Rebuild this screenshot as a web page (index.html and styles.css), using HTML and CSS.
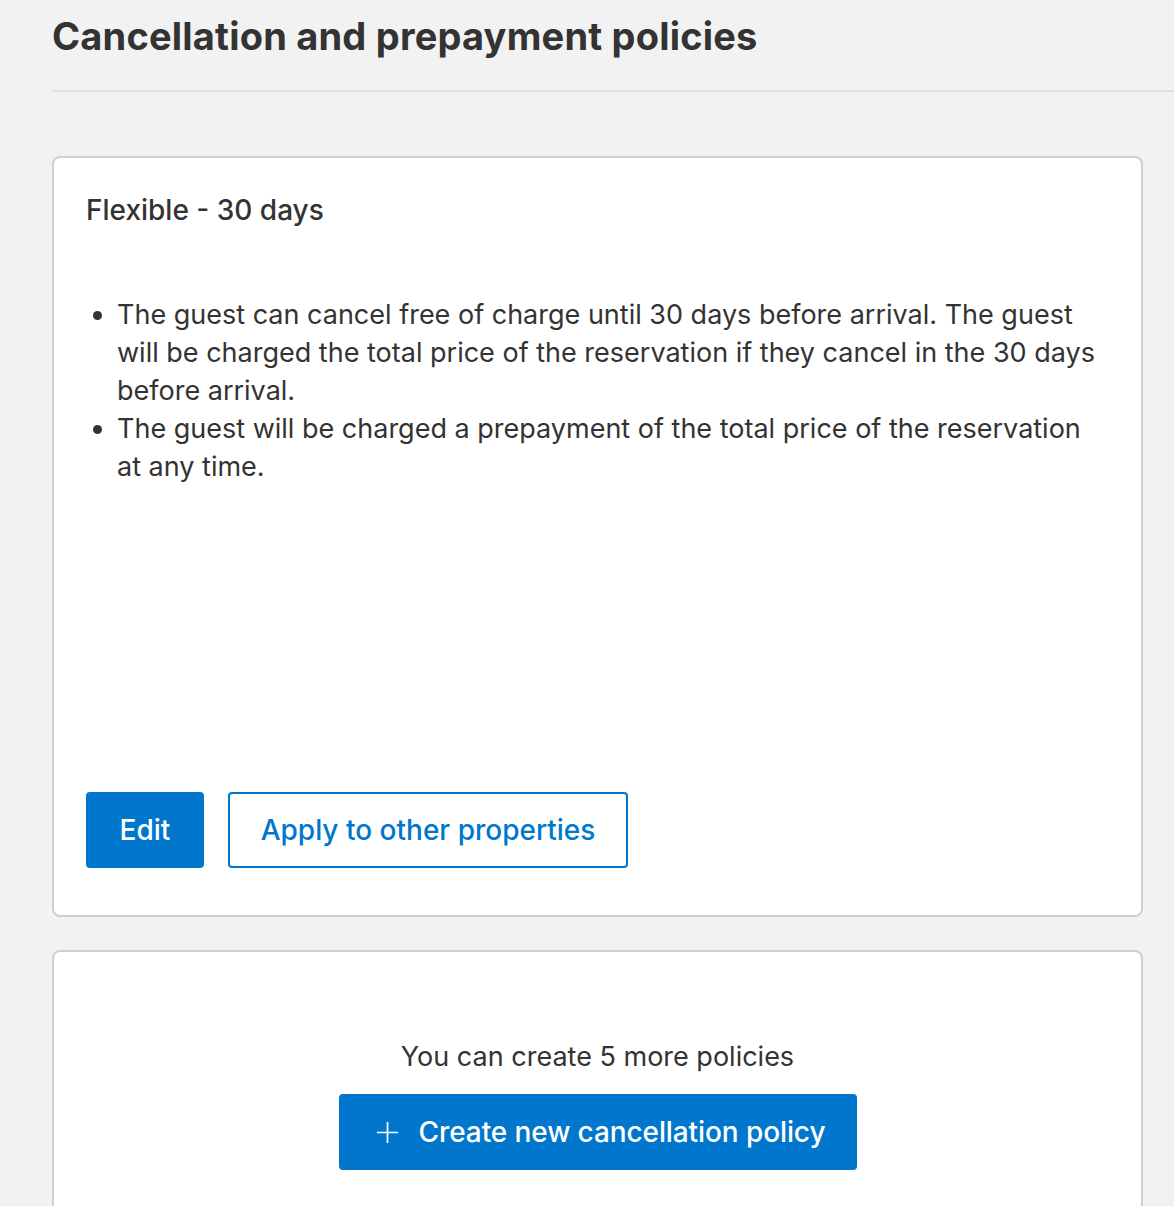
FILE: index.html
```html
<!DOCTYPE html>
<html>
<head>
<meta charset="utf-8">
<link rel="stylesheet" href="styles.css">
</head>
<body>
<main class="page">
  <header class="page-header">
    <h1 class="page-title">Cancellation and prepayment policies</h1>
  </header>
  <section class="cards">
    <article class="card policy-card">
      <h2 class="policy-name">Flexible - 30 days</h2>
      <ul class="policy-list">
        <li>The guest can cancel free of charge until 30 days before arrival. The guest will be charged the total price of the reservation if they cancel in the 30 days before arrival.</li>
        <li>The guest will be charged a prepayment of the total price of the reservation at any time.</li>
      </ul>
      <div class="actions">
        <button class="btn btn-primary btn-edit">Edit</button>
        <button class="btn btn-outline">Apply to other properties</button>
      </div>
    </article>
    <article class="card create-card">
      <p class="create-note">You can create 5 more policies</p>
      <button class="btn btn-primary btn-create">
        <svg class="plus" width="23" height="23" viewBox="0 0 24 24" aria-hidden="true"><path d="M12 1v22M1 12h22" stroke="currentColor" stroke-width="1.8" fill="none"/></svg>
        <span>Create new cancellation policy</span>
      </button>
    </article>
  </section>
</main>
</body>
</html>
```
FILE: styles.css
```css
html, body {
  margin: 0;
  padding: 0;
  background: #f2f2f2;
}
body {
  font-family: Inter, "Open Sans", "Liberation Sans", sans-serif;
  color: #333333;
  overflow: hidden;
  height: 1206px;
}
.page {
  padding-left: 52px;
}
.page-header {
  border-bottom: 2px solid #e0e0e0;
  padding-top: 13px;
  padding-bottom: 31px;
}
.page-title {
  margin: 0;
  font-size: 38px;
  line-height: 46px;
  font-weight: 700;
  letter-spacing: 0.2px;
  color: #333333;
}
.cards {
  margin-right: 31px;
  padding-top: 64px;
  display: flex;
  flex-direction: column;
  gap: 33px;
}
.card {
  background: #ffffff;
  border: 2px solid #cfcfcf;
  border-radius: 8px;
}
.policy-card {
  height: 761px;
  box-sizing: border-box;
  padding: 32px 32px 47px 32px;
  display: flex;
  flex-direction: column;
}
.policy-name {
  margin: 0;
  font-size: 28px;
  line-height: 40px;
  font-weight: 500;
}
.policy-list {
  margin: 66px 0 0 0;
  padding-left: 31px;
  font-size: 27px;
  line-height: 38px;
}
.actions {
  margin-top: auto;
  display: flex;
  gap: 24px;
}
.btn {
  font-family: inherit;
  font-size: 28px;
  font-weight: 500;
  height: 76px;
  border-radius: 4px;
  box-sizing: border-box;
  cursor: pointer;
}
.btn-primary {
  background: #0077cc;
  color: #ffffff;
  border: none;
}
.btn-edit {
  width: 118px;
}
.btn-outline {
  width: 400px;
  background: #ffffff;
  color: #0077cc;
  border: 2px solid #0077cc;
}
.create-card {
  height: 300px;
  display: flex;
  flex-direction: column;
  align-items: center;
  padding-top: 86px;
  box-sizing: border-box;
}
.create-note {
  margin: 0;
  font-size: 27px;
  line-height: 38px;
}
.btn-create {
  margin-top: 18px;
  width: 518px;
  display: flex;
  align-items: center;
  justify-content: center;
  gap: 20px;
  padding-left: 6px;
  padding-right: 0;
  letter-spacing: -0.1px;
}
.plus {
  display: block;
}
```
